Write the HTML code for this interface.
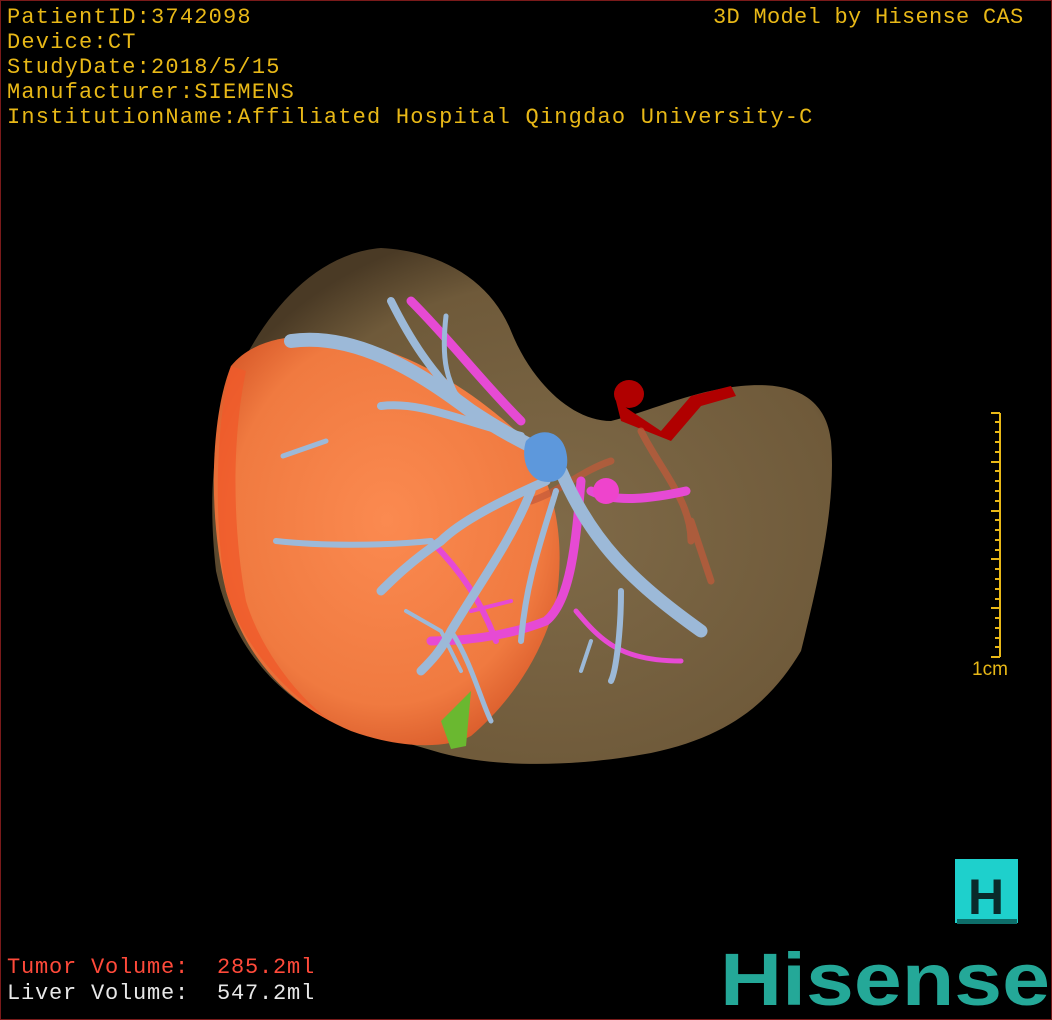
<!DOCTYPE html>
<html><head><meta charset="utf-8"><style>
html,body{margin:0;padding:0;background:#000}
#f{position:relative;width:1050px;height:1018px;border:1px solid #7a1a1a;background:#000;overflow:hidden}
.t{position:absolute;left:6px;font-family:"Liberation Mono",monospace;color:#e8b817;font-size:22px;line-height:25px;letter-spacing:1.2px;white-space:pre}
svg{position:absolute;left:0;top:0}
</style></head><body><div id="f">
<svg width="1050" height="1018" viewBox="0 0 1050 1018">
<defs>
<radialGradient id="lb" cx="0.55" cy="0.55" r="0.6"><stop offset="0" stop-color="#7f6a48"/><stop offset="0.8" stop-color="#6f5a3a"/><stop offset="1" stop-color="#4a3a25"/></radialGradient>
<radialGradient id="or" cx="0.5" cy="0.45" r="0.6"><stop offset="0" stop-color="#fb8a50"/><stop offset="0.75" stop-color="#f07a40"/><stop offset="1" stop-color="#d85a2a"/></radialGradient>
</defs>
<path d="M380,247 C440,250 490,280 510,330 C530,380 570,420 610,420 C650,410 690,390 740,385 C790,380 825,395 830,440 C835,500 820,570 800,650 C770,700 730,735 650,752 C580,765 500,768 440,752 L330,720 C270,690 230,640 215,570 C205,480 215,410 245,355 C275,300 320,252 380,247 Z" fill="url(#lb)"/>
<path d="M230,365 C250,340 290,330 340,338 C400,348 460,380 515,430 C555,475 565,540 555,600 C540,660 505,705 470,735 C445,748 400,748 350,730 C290,705 245,660 225,590 C208,520 208,420 230,365 Z" fill="url(#or)"/>
<path d="M230,365 C215,420 212,520 225,590 C240,640 280,690 330,720 C300,700 260,650 245,600 C230,520 232,430 245,370 Z" fill="#f05a2a" opacity="0.8"/>
<path d="M440,720 L470,690 L465,745 L450,748 Z" fill="#6ab830"/>
<g fill="#b00000"><ellipse cx="628" cy="393" rx="15" ry="14"/><path d="M615,400 L660,430 L690,395 L730,385 L735,395 L700,405 L670,440 L620,420 Z"/></g>
<g stroke="#c35a3a" stroke-width="7" fill="none" opacity="0.7" stroke-linecap="round"><path d="M640,430 C660,470 690,500 690,540"/><path d="M530,500 C560,490 580,470 610,460"/><path d="M690,520 L710,580"/></g>
<g stroke="#e64ad4" fill="none" stroke-linecap="round">
<path d="M410,300 C450,340 480,380 520,420" stroke-width="9"/>
<path d="M590,490 C610,500 640,500 685,490" stroke-width="9"/>
<path d="M580,480 C575,540 570,600 545,620 C520,630 480,640 430,640" stroke-width="9"/>
<path d="M575,610 C600,640 620,660 680,660" stroke-width="5"/>
<path d="M430,540 C460,570 480,600 495,640" stroke-width="6"/>
<path d="M470,610 L510,600" stroke-width="4"/>
</g>
<circle cx="605" cy="490" r="13" fill="#ee44cc"/>
<g stroke="#9cb9d8" fill="none" stroke-linecap="round">
<path d="M290,340 C360,330 430,380 470,410 C500,430 520,440 540,450" stroke-width="14"/>
<path d="M390,300 C410,340 430,370 460,400" stroke-width="8"/>
<path d="M445,315 C440,360 445,380 465,410" stroke-width="5"/>
<path d="M380,405 C420,400 460,420 520,435" stroke-width="8"/>
<path d="M560,470 C590,540 630,580 700,630" stroke-width="13"/>
<path d="M545,480 C500,500 460,520 440,540 C410,560 390,580 380,590" stroke-width="9"/>
<path d="M275,540 C320,545 380,545 430,540" stroke-width="6"/>
<path d="M530,490 C510,540 480,580 450,630 C440,650 430,660 420,670" stroke-width="9"/>
<path d="M555,490 C540,540 525,580 520,640" stroke-width="6"/>
<path d="M620,590 C620,630 615,670 610,680" stroke-width="6"/>
<path d="M450,630 C470,660 480,700 490,720" stroke-width="5"/>
<path d="M282,455 L325,440" stroke-width="5"/>
<path d="M405,610 L440,630 L460,670" stroke-width="4"/>
<path d="M590,640 L580,670" stroke-width="4"/>
</g>
<path d="M525,440 C540,425 560,430 565,450 C570,470 560,485 540,480 C525,475 520,455 525,440 Z" fill="#5d98dc"/>
</svg>
<div class="t" style="top:4px">PatientID:3742098
Device:CT
StudyDate:2018/5/15
Manufacturer:SIEMENS
InstitutionName:Affiliated Hospital Qingdao University-C</div>
<div class="t" style="top:4px;left:712px;letter-spacing:0.3px">3D Model by Hisense CAS</div>
<div class="t" style="top:954px;color:#ff4a3a;letter-spacing:0.8px">Tumor Volume:  285.2ml</div>
<div class="t" style="top:980px;color:#e8e8e8;letter-spacing:0.8px">Liver Volume:  547.2ml</div>
<svg width="1050" height="1018" style="pointer-events:none">
<g stroke="#e8b817" stroke-width="2">
<line x1="999" y1="412" x2="999" y2="656"/>
<path d="M990,412H999 M994,421H999 M994,431H999 M994,441H999 M994,451H999 M990,461H999 M994,470H999 M994,480H999 M994,490H999 M994,500H999 M990,510H999 M994,519H999 M994,529H999 M994,539H999 M994,549H999 M990,558H999 M994,568H999 M994,578H999 M994,588H999 M994,598H999 M990,607H999 M994,617H999 M994,627H999 M994,637H999 M994,646H999 M990,656H999"/>
</g>
<text x="971" y="674" fill="#e8b817" font-family="Liberation Sans, sans-serif" font-size="19">1cm</text>
<rect x="954" y="858" width="63" height="64" fill="#1ed0cc"/>
<rect x="956" y="918" width="60" height="5" fill="#0d6e6a"/>
<text x="985" y="913" fill="#0a2a2a" text-anchor="middle" font-family="Liberation Sans, sans-serif" font-weight="bold" font-size="50">H</text>
<text x="719" y="1004" fill="#24a898" font-family="Liberation Sans, sans-serif" font-weight="bold" font-size="74" textLength="330" lengthAdjust="spacingAndGlyphs">Hisense</text>
</svg>
</div></body></html>
